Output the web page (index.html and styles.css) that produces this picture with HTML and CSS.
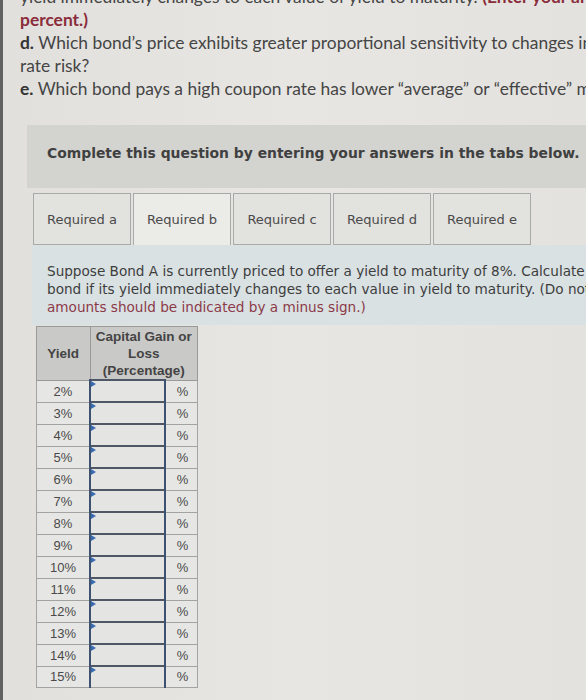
FILE: index.html
```html
<!DOCTYPE html>
<html>
<head>
<meta charset="utf-8">
<link rel="stylesheet" href="styles.css">
</head>
<body>
<div class="page">
  <div class="intro">
    <p class="line">yield immediately changes to each value of yield to maturity. <b class="red">(Enter your answers as a</b></p>
    <p class="line"><b class="red">percent.)</b></p>
    <p class="line"><b>d.</b> Which bond’s price exhibits greater proportional sensitivity to changes in interest</p>
    <p class="line">rate risk?</p>
    <p class="line"><b>e.</b> Which bond pays a high coupon rate has lower “average” or “effective” maturity?</p>
  </div>

  <div class="banner">Complete this question by entering your answers in the tabs below.</div>

  <div class="tabs">
    <div class="tab">Required a</div>
    <div class="tab active">Required b</div>
    <div class="tab">Required c</div>
    <div class="tab">Required d</div>
    <div class="tab">Required e</div>
  </div>

  <div class="panel">
    <p class="qline">Suppose Bond A is currently priced to offer a yield to maturity of 8%. Calculate the capital gain or loss on the</p>
    <p class="qline">bond if its yield immediately changes to each value in yield to maturity. (Do not round intermediate calculations.</p>
    <p class="qline red2">amounts should be indicated by a minus sign.)</p>
  </div>

  <div class="work">
    <table class="grid">
      <thead>
        <tr>
          <th class="c-yield">Yield</th>
          <th class="c-head" colspan="2">Capital Gain or<br>Loss<br>(Percentage)</th>
        </tr>
      </thead>
      <tbody>
        <tr><td class="c-yield">2%</td><td class="c-in"><span class="flag"></span></td><td class="c-pct">%</td></tr>
        <tr><td class="c-yield">3%</td><td class="c-in"><span class="flag"></span></td><td class="c-pct">%</td></tr>
        <tr><td class="c-yield">4%</td><td class="c-in"><span class="flag"></span></td><td class="c-pct">%</td></tr>
        <tr><td class="c-yield">5%</td><td class="c-in"><span class="flag"></span></td><td class="c-pct">%</td></tr>
        <tr><td class="c-yield">6%</td><td class="c-in"><span class="flag"></span></td><td class="c-pct">%</td></tr>
        <tr><td class="c-yield">7%</td><td class="c-in"><span class="flag"></span></td><td class="c-pct">%</td></tr>
        <tr><td class="c-yield">8%</td><td class="c-in"><span class="flag"></span></td><td class="c-pct">%</td></tr>
        <tr><td class="c-yield">9%</td><td class="c-in"><span class="flag"></span></td><td class="c-pct">%</td></tr>
        <tr><td class="c-yield">10%</td><td class="c-in"><span class="flag"></span></td><td class="c-pct">%</td></tr>
        <tr><td class="c-yield">11%</td><td class="c-in"><span class="flag"></span></td><td class="c-pct">%</td></tr>
        <tr><td class="c-yield">12%</td><td class="c-in"><span class="flag"></span></td><td class="c-pct">%</td></tr>
        <tr><td class="c-yield">13%</td><td class="c-in"><span class="flag"></span></td><td class="c-pct">%</td></tr>
        <tr><td class="c-yield">14%</td><td class="c-in"><span class="flag"></span></td><td class="c-pct">%</td></tr>
        <tr><td class="c-yield">15%</td><td class="c-in"><span class="flag"></span></td><td class="c-pct">%</td></tr>
      </tbody>
    </table>
  </div>
</div>
</body>
</html>
```

FILE: styles.css
```css
html, body {
  margin: 0;
  padding: 0;
  height: 700px;
  overflow: hidden;
}
body {
  background: #e4e3e0;
}
.page {
  border-left: 3px solid #626260;
  height: 700px;
  overflow: hidden;
  background: linear-gradient(90deg, #e1e0dd 0%, #e7e6e3 50%, #e3e2df 100%);
}
.intro {
  margin-top: -15px;
  padding-left: 17px;
  font-family: Lato, "Open Sans", sans-serif;
  font-size: 17.4px;
  color: #454545;
}
.line {
  margin: 0;
  height: 23px;
  line-height: 23px;
  white-space: nowrap;
}
.line b { font-weight: 700; color: #333; }
.line b.red, .red { color: #8a2c3a; }

.banner {
  margin: 25px 0 0 24px;
  height: 63px;
  background: #d3d3d0;
  box-sizing: border-box;
  padding: 20px 0 0 20px;
  font-family: "DejaVu Sans", Verdana, sans-serif;
  font-weight: bold;
  font-size: 13.9px;
  color: #404040;
  white-space: nowrap;
}

.tabs {
  display: flex;
  margin: 5px 0 0 30px;
  gap: 2px;
  align-items: flex-end;
}
.tab {
  width: 98px;
  height: 52px;
  box-sizing: border-box;
  border: 1px solid #a9a9a7;
  background: #e2e2df;
  font-family: "DejaVu Sans", Verdana, sans-serif;
  font-size: 13px;
  color: #4a4a4a;
  display: flex;
  align-items: center;
  justify-content: center;
}
.tab.active {
  background: #ebebe8;
  border-bottom: none;
}

.panel {
  margin-left: 29px;
  background: #d9e1e3;
  padding: 17px 0 9px 15px;
  font-family: "DejaVu Sans", Verdana, sans-serif;
  font-size: 13.6px;
  color: #3d3d3d;
}
.qline {
  margin: 0;
  line-height: 18px;
  white-space: nowrap;
}
.red2 { color: #8c3a48; }

.work {
  padding: 1px 0 0 33px;
}
.grid {
  border-collapse: collapse;
  font-family: "Liberation Sans", Arial, sans-serif;
  font-size: 13px;
  color: #4a4a4a;
}
.grid th {
  background: #c9c9c7;
  border: 1px solid #9a9a98;
  font-weight: bold;
  font-size: 13.5px;
  color: #444;
  line-height: 17px;
  padding: 1px 4px 0;
}
.grid th.c-yield { width: 44px; }
.grid td {
  border: 1px solid #a3a3a1;
  height: 20px;
  padding: 0;
  background: #e6e6e4;
}
.grid td.c-yield {
  width: 52px;
  text-align: center;
}
.grid td.c-in {
  width: 73px;
  position: relative;
  border-left: 2px solid #3d5170;
  border-right: 2px solid #3d5170;
  border-top: 2px solid #4f5765;
  background: #e4e4e2;
}
.flag {
  position: absolute;
  left: 0;
  top: 0;
  width: 0;
  height: 0;
  border-top: 3px solid transparent;
  border-bottom: 3px solid transparent;
  border-left: 5px solid #3a6bb0;
}
.grid td.c-pct {
  width: 29px;
  text-align: center;
  padding-left: 2px;
}
```
